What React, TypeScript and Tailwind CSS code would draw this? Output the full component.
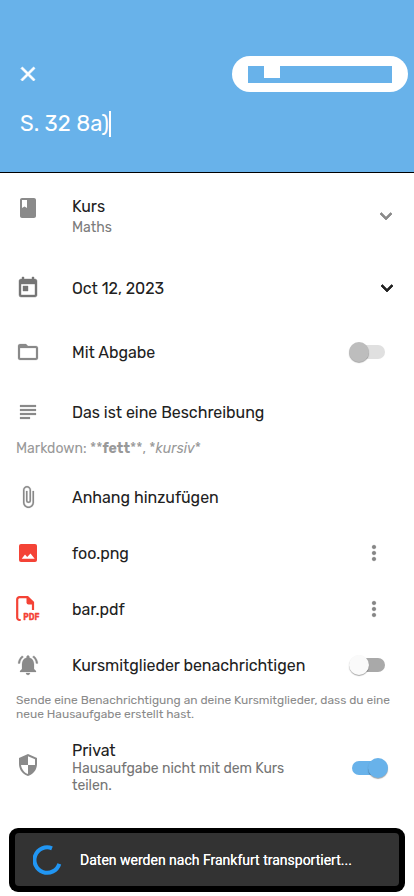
import type { ReactNode } from "react";
import {
  MdClose,
  MdBook,
  MdToday,
  MdFolderOpen,
  MdSubject,
  MdAttachFile,
  MdNotificationsActive,
  MdSecurity,
  MdMoreVert,
  MdKeyboardArrowDown,
} from "react-icons/md";

function PdfIcon() {
  return (
    <svg width="26" height="28" viewBox="0 0 26 28" className="-ml-px overflow-visible text-[#f44336]" aria-hidden="true">
      <path d="M11.500 1.500H13L19 7.500V9.500H13.500a2 2 0 0 1-2-2Z" fill="currentColor" />
      <path
        d="M5.700 25H4.500A2.300 2.300 0 0 1 2.200 22.700V4.500A2.300 2.300 0 0 1 4.500 2.200H12.500L18 7.500V15"
        fill="none"
        stroke="currentColor"
        strokeWidth="2.200"
      />
      <text x="8.300" y="25.200" fontSize="9.900" fontWeight="700" textLength="16.200" lengthAdjust="spacingAndGlyphs" fill="currentColor" stroke="currentColor" strokeWidth="0.300" fontFamily="Rubik, Roboto, sans-serif">
        PDF
      </text>
    </svg>
  );
}

function ImageIcon() {
  return (
    <svg width="24" height="24" viewBox="0 0 24 24" className="text-[#f44336]" aria-hidden="true">
      <rect x="3" y="3" width="18" height="18" rx="2" fill="currentColor" />
      <path d="M5.700 17.800 9 13.600l2.200 2.300 3.300-3.300 4.200 5.200Z" fill="#fff" />
    </svg>
  );
}

function Row({ icon, className, children, action }: { icon: ReactNode; className: string; children: ReactNode; action?: ReactNode }) {
  return (
    <div className={`flex items-center ${className}`}>
      <div className="ml-4 flex w-14 shrink-0 text-[24px] text-[#8a8a8a]">{icon}</div>
      <div className="min-w-0 flex-1 whitespace-nowrap pt-[2px] text-base leading-5 tracking-[-0.03px] text-[#212121]">{children}</div>
      {action}
    </div>
  );
}

function Switch({ track, thumb, on }: { track: string; thumb: string; on?: boolean }) {
  return (
    <div className={`flex h-5 w-9 items-center ${on ? "mr-[26px]" : "mr-[29px]"}`}>
      <div className={`h-[14px] w-[34px] shrink-0 rounded-full ${track} ${on ? "-mr-[18px]" : "ml-[2px] -mr-9"}`} />
      <div className={`relative size-5 shrink-0 rounded-full shadow-[0_1px_1px_rgba(0,0,0,0.35)] ${thumb}`} />
    </div>
  );
}

export default function App() {
  return (
    <main className="flex h-[896px] w-[414px] flex-col overflow-hidden bg-white font-['Rubik','Roboto',sans-serif] [&_path[fill=none]:first-child:not(:last-child)]:stroke-none">
      <header className="h-[173px] shrink-0 border-b border-black bg-[#68b2ea] text-white">
        <div className="flex items-center justify-between pl-4 pr-[6px] pt-14">
          <MdClose className="stroke-[0.8px] text-[24px] [stroke-linejoin:round]" />
          <div className="flex h-9 w-44 items-center justify-center rounded-full bg-white">
            <div className="mt-px h-[17px] w-36 bg-[#68b2ea] pl-4">
              <div className="h-3 w-4 bg-white" />
            </div>
          </div>
        </div>
        <div className="mt-[18px] flex items-center pl-5">
          <span className="text-[22px] leading-[28px]">S. 32 8a)</span>
          <span className="h-[26px] w-[2px] bg-white" />
        </div>
      </header>

      <Row className="mt-[15px] h-14" icon={<MdBook className="mb-[16px]" />} action={<MdKeyboardArrowDown className="mr-4 stroke-[0.8px] text-[24px] text-[#8a8a8a]" />}>
        <div className="mt-px">Kurs</div>
        <div className="mt-px text-sm leading-5 text-[#7b7b7b]">Maths</div>
      </Row>
      <Row className="mt-4 h-14" icon={<MdToday className="stroke-[0.4px] text-[#757575]" />} action={<MdKeyboardArrowDown className="mr-[15px] stroke-[0.8px] text-[24px] text-[#212121]" />}>
        Oct 12, 2023
      </Row>
      <Row className="mt-2 h-14" icon={<MdFolderOpen className="stroke-[0.2px]" />} action={<Switch track="bg-[#e0e0e0]" thumb="bg-[#bdbdbd]" />}>
        Mit Abgabe
      </Row>
      <Row className="mt-1 h-14" icon={<MdSubject className="stroke-[0.2px]" />}>
        Das ist eine Beschreibung
      </Row>
      <p className="-mt-px h-[18px] whitespace-nowrap pl-4 pt-px text-sm leading-[18px] text-[#999]">
        Markdown: **<b>fett</b>**, *<i>kursiv</i>*
      </p>
      <Row className="mt-3 h-14" icon={<MdAttachFile className="stroke-[0.2px]" />}>
        Anhang hinzufügen
      </Row>
      <Row className="h-14" icon={<ImageIcon />} action={<MdMoreVert className="mr-7 stroke-[0.2px] text-[24px] text-[#858585]" />}>
        foo.png
      </Row>
      <Row className="h-14" icon={<PdfIcon />} action={<MdMoreVert className="mr-7 stroke-[0.2px] text-[24px] text-[#858585]" />}>
        bar.pdf
      </Row>
      <Row className="h-14" icon={<MdNotificationsActive className="stroke-[0.2px]" />} action={<Switch track="bg-[#a9a9a9]" thumb="bg-[#fafafa]" />}>
        Kursmitglieder benachrichtigen
      </Row>
      <p className="whitespace-nowrap pl-4 text-xs leading-[14px] tracking-[-0.015px] text-[#8a8a8a]">
        Sende eine Benachrichtigung an deine Kursmitglieder, dass du eine
        <br />
        neue Hausaufgabe erstellt hast.
      </p>
      <Row className="mt-3 h-[64px]" icon={<MdSecurity className="-scale-x-100" />} action={<Switch on track="mb-[-5px] bg-[#68b2ea]" thumb="mb-[-5px] bg-[#68b2ea]" />}>
        <div className="pt-[3px]">Privat</div>
        <div className="-mt-px mb-px text-sm leading-[17px] text-[#757575]">
          Hausaufgabe nicht mit dem Kurs
          <br />
          teilen.
        </div>
      </Row>

      <div className="ml-[9px] mt-[31px] flex h-[64px] w-[396px] shrink-0 rounded-[9px] bg-black p-[5px_6px_6px]">
        <div className="flex flex-1 items-center rounded-[4px] bg-[#333] pl-[18px] text-white">
          <svg width="30" height="30" viewBox="0 0 30 30" aria-hidden="true">
            <path d="M19 3.300A12.700 12.700 0 1 0 26.300 18.800" fill="none" stroke="#2196f3" strokeWidth="4" />
          </svg>
          <span className="ml-[17px] whitespace-nowrap font-['Roboto',sans-serif] text-sm [text-shadow:0_0_0.5px_#fff]">Daten werden nach Frankfurt transportiert...</span>
        </div>
      </div>
    </main>
  );
}
